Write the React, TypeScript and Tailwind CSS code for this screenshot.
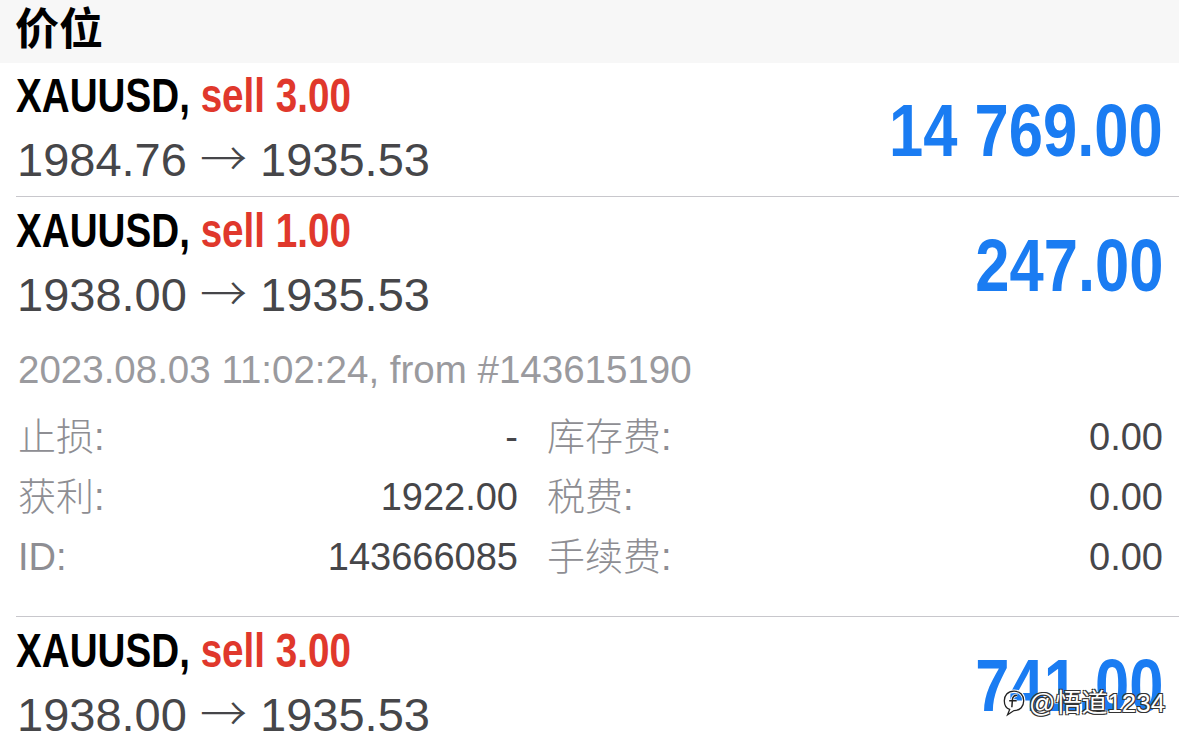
import React from "react";

const LAT = "font-['Liberation_Sans','Noto_Sans_CJK_SC',sans-serif]";

function Sep() {
  return <div className="ml-[16px] h-px bg-[#c8c7cc]" />;
}

function PosRow({ side, a, b, value }: { side: string; a: string; b: string; value: string }) {
  return (
    <div className="flex items-center pl-[16px] pr-[16px]">
      <div className="flex-1 min-w-0">
        <div className="h-[64px] flex items-center">
          <span className="inline-block origin-left scale-x-[0.805] whitespace-nowrap text-[48px] font-bold leading-none text-black">
            XAUUSD, <span className="text-[#e0382c]">{side}</span>
          </span>
        </div>
        <div className="h-[64px] flex items-center pb-[6px]">
          <span className="whitespace-nowrap text-[47px] leading-none text-[#464649] pl-[1px]">
            {a} <span className="font-['Noto_Sans_CJK_SC',sans-serif] font-light">→</span> {b}
          </span>
        </div>
      </div>
      <div className="flex justify-end pt-[5px]">
        <span className="inline-block origin-right scale-x-[0.82] whitespace-nowrap text-[75px] font-bold leading-none text-[#1a7cf2]">
          {value}
        </span>
      </div>
    </div>
  );
}

function Detail({ l1, v1, l2, v2 }: { l1: string; v1: string; l2: string; v2: string }) {
  return (
    <div className="flex h-[60px] items-center text-[38px] leading-none">
      <div className="w-[500px] flex justify-between items-center">
        <span className="text-[#8e8e93] font-light">{l1}</span>
        <span className="text-[#464649]">{v1}</span>
      </div>
      <div className="ml-[29px] flex-1 flex justify-between items-center">
        <span className="text-[#8e8e93] font-light">{l2}</span>
        <span className="text-[#464649]">{v2}</span>
      </div>
    </div>
  );
}

export default function App() {
  return (
    <div className={`relative w-[1179px] h-[748px] overflow-hidden bg-white ${LAT}`}>
      <div className="h-[63px] bg-[#f7f7f7] flex items-center px-[15px] pb-[10px]">
        <span className="text-[44px] font-bold leading-[1.2] text-black font-['Noto_Sans_CJK_SC',sans-serif]">价位</span>
      </div>
      <div className="pt-[1px] pb-[4px]">
        <PosRow side="sell 3.00" a="1984.76" b="1935.53" value="14 769.00" />
      </div>
      <Sep />
      <div className="pt-[2px] pb-[29px]">
        <PosRow side="sell 1.00" a="1938.00" b="1935.53" value="247.00" />
        <div className="mt-[13px] h-[60px] flex items-center pl-[18px] text-[38.5px] leading-none text-[#9a9a9e] whitespace-nowrap">
          2023.08.03 11:02:24, from #143615190
        </div>
        <div className="mt-[7px] pl-[18px] pr-[16px]">
          <Detail l1="止损:" v1="-" l2="库存费:" v2="0.00" />
          <Detail l1="获利:" v1="1922.00" l2="税费:" v2="0.00" />
          <Detail l1="ID:" v1="143666085" l2="手续费:" v2="0.00" />
        </div>
      </div>
      <Sep />
      <div className="pt-[2px]">
        <PosRow side="sell 3.00" a="1938.00" b="1935.53" value="741.00" />
      </div>

      <div className="absolute left-[1002px] top-[689px] flex items-center gap-[3px]">
        <svg width="24" height="28" viewBox="0 0 22 26" fill="none">
          <path d="M11 2 C5 2 2 6 2 11 C2 15 4 18 7 19 L5 24 L11 20 C17 20 20 16 20 11 C20 6 17 2 11 2 Z" stroke="#ffffff" strokeWidth="3.2" fill="none" />
          <path d="M11 2 C5 2 2 6 2 11 C2 15 4 18 7 19 L5 24 L11 20 C17 20 20 16 20 11 C20 6 17 2 11 2 Z" stroke="#222" strokeWidth="1.2" fill="none" />
          <path d="M14 6 C11 5.5 9.5 7.5 9.5 10.5 L9 17 M6.5 11 L13.5 11" stroke="#ffffff" strokeWidth="3" fill="none" />
          <path d="M14 6 C11 5.5 9.5 7.5 9.5 10.5 L9 17 M6.5 11 L13.5 11" stroke="#222" strokeWidth="1.4" fill="none" />
        </svg>
        <span className="text-[26px] leading-none text-white font-['Liberation_Sans','Noto_Sans_CJK_SC',sans-serif] [text-shadow:1px_1px_0_#333,-1px_-1px_0_#333,1px_-1px_0_#333,-1px_1px_0_#333]">
          @悟道1234
        </span>
      </div>
    </div>
  );
}
